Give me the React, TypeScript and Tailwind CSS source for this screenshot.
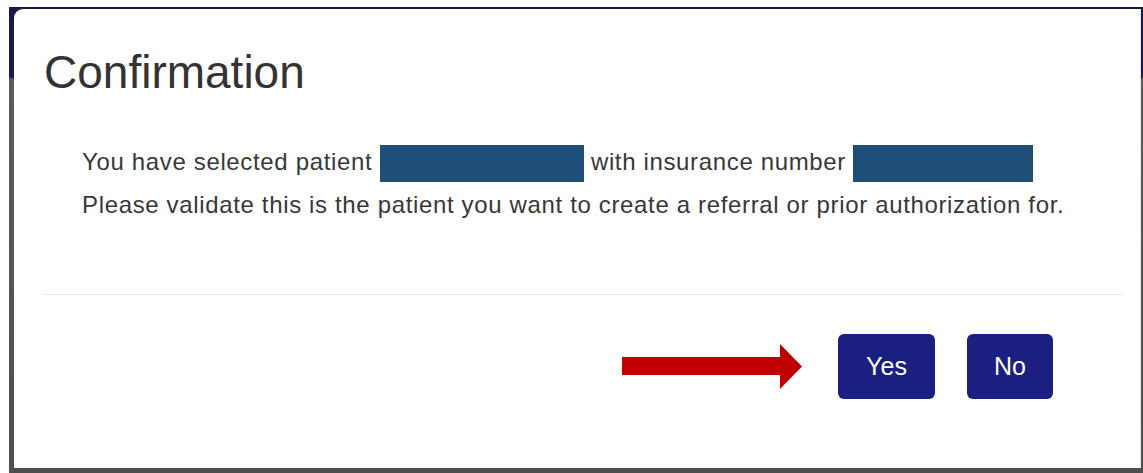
import React from "react";

const Redacted: React.FC<{ width: string }> = ({ width }) => (
  <span className={`inline-block h-[37px] align-middle bg-[#1f4e79] ${width}`} />
);

const PointerArrow: React.FC = () => (
  <svg width="180" height="46" viewBox="0 0 180 46" className="block">
    <rect x="0" y="13" width="162" height="18" fill="#c00000" />
    <polygon points="158,0 180,22.5 158,45" fill="#c00000" />
  </svg>
);

export default function App() {
  return (
    <div
      className="w-[1143px] h-[473px] bg-white pt-[7px] pl-[9px] flex overflow-hidden"
      style={{ fontFamily: '"Liberation Sans", Arial, sans-serif' }}
    >
      <div className="flex-1 flex pt-[2px] pl-[5px] pb-[5px] bg-[linear-gradient(to_bottom,#161a4e_0px,#161a4e_70px,#5b5c5c_72px,#4e4e4e_100%)]">
        <div className="flex-1 flex flex-col bg-white rounded-tl-[9px] border-r border-[#e6e6e6] mr-[2px]">
          <h4 className="mt-[37px] pl-[30px] text-[46px] leading-[52px] font-normal text-[#333]">
            Confirmation
          </h4>

          <div className="mt-[44px] pl-[68px] text-[24px] leading-[39px] tracking-[0.65px] text-[#383838]">
            <p>
              You have selected patient <Redacted width="w-[204px]" /> with insurance number{" "}
              <Redacted width="w-[180px]" />
            </p>
            <p className="mt-[3px]">
              Please validate this is the patient you want to create a referral or prior authorization for.
            </p>
          </div>

          <div className="mt-[70px] ml-[30px] w-[1078px] h-px bg-[#e5e5e5]" />

          <div className="mt-[39px] flex items-center justify-end pr-[87px]">
            <PointerArrow />
            <button className="ml-[36px] w-[97px] h-[65px] rounded-[6px] bg-[#1b2080] text-white text-[25px] leading-none">
              Yes
            </button>
            <button className="ml-[32px] w-[86px] h-[65px] rounded-[6px] bg-[#1b2080] text-white text-[25px] leading-none">
              No
            </button>
          </div>
        </div>
      </div>
    </div>
  );
}
